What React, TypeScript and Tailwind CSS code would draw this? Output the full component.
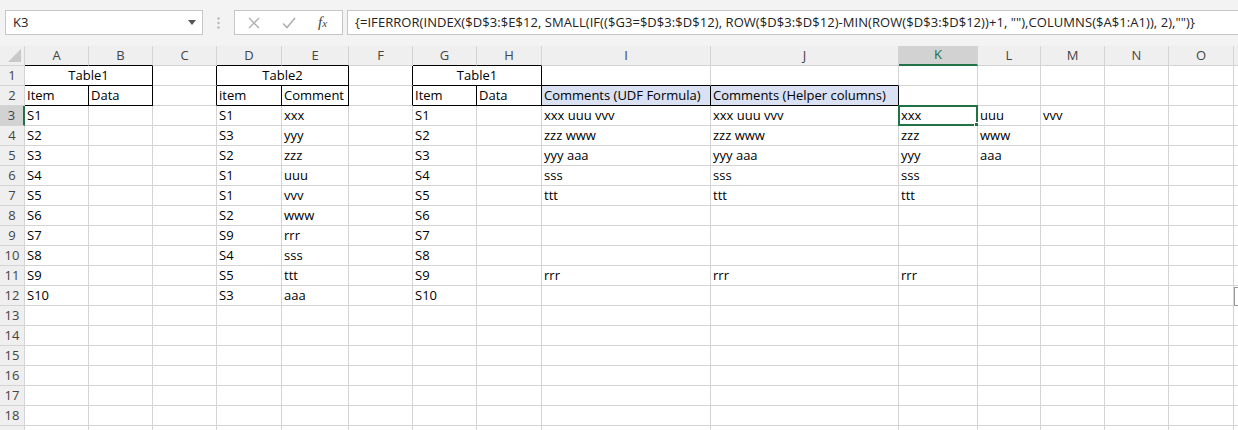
import React from 'react'

const cols = ['A', 'B', 'C', 'D', 'E', 'F', 'G', 'H', 'I', 'J', 'K', 'L', 'M', 'N', 'O', 'P']

const data: Record<string, string> = {
  A2: 'Item', B2: 'Data', D2: 'item', E2: 'Comment', G2: 'Item', H2: 'Data',
  I2: 'Comments (UDF Formula)', J2: 'Comments (Helper columns)',
  I3: 'xxx uuu vvv', J3: 'xxx uuu vvv', K3: 'xxx', L3: 'uuu', M3: 'vvv',
  I4: 'zzz www', J4: 'zzz www', K4: 'zzz', L4: 'www',
  I5: 'yyy aaa', J5: 'yyy aaa', K5: 'yyy', L5: 'aaa',
  I6: 'sss', J6: 'sss', K6: 'sss',
  I7: 'ttt', J7: 'ttt', K7: 'ttt',
  I11: 'rrr', J11: 'rrr', K11: 'rrr',
}
const dCol = ['S1', 'S3', 'S2', 'S1', 'S1', 'S2', 'S9', 'S4', 'S5', 'S3']
const eCol = ['xxx', 'yyy', 'zzz', 'uuu', 'vvv', 'www', 'rrr', 'sss', 'ttt', 'aaa']
for (let i = 0; i < 10; i++) {
  data['A' + (i + 3)] = 'S' + (i + 1)
  data['G' + (i + 3)] = 'S' + (i + 1)
  data['D' + (i + 3)] = dCol[i]
  data['E' + (i + 3)] = eCol[i]
}

// black table edges
const blackRight: Record<number, string[]> = {
  1: ['B', 'C', 'E', 'F', 'H'],
  2: ['A', 'B', 'C', 'D', 'E', 'F', 'G', 'H', 'I', 'J'],
}
const blackBottom: Record<number, string[]> = {
  0: ['A', 'B', 'D', 'E', 'G', 'H'],
  1: ['A', 'B', 'D', 'E', 'G', 'H', 'I', 'J'],
  2: ['A', 'B', 'D', 'E', 'G', 'H', 'I', 'J'],
}
const merged: Record<string, string> = { A1: 'Table1', D1: 'Table2', G1: 'Table1' }

const cellFont = { fontFamily: '"Open Sans", sans-serif' }

function Cell({ row, col }: { row: number; col: string }) {
  const key = col + row
  const br = blackRight[row]?.includes(col) ? 'border-r-black' : 'border-r-[#d4d4d4]'
  const bb = blackBottom[row]?.includes(col) ? 'border-b-black' : 'border-b-[#d4d4d4]'
  const fill = row === 2 && (col === 'I' || col === 'J') ? 'bg-[#d9e1f2]' : 'bg-white'
  const selected = key === 'K3'
  return (
    <div className={`relative h-5 border-r border-b ${br} ${bb} ${fill} flex items-end pl-[2px] pb-[1px] overflow-visible whitespace-nowrap text-[13px] leading-[18px] text-black`}>
      {data[key]}
      {selected && (
        <div className="absolute -left-[1px] -top-[1px] -right-[1px] -bottom-[1px] border-2 border-[#217346]">
          <div className="absolute -right-[4px] -bottom-[4px] w-[6px] h-[6px] bg-[#217346] border border-white" />
        </div>
      )}
    </div>
  )
}

function MergedCell({ row, col }: { row: number; col: string }) {
  return (
    <div className="col-span-2 h-5 border-r border-b border-r-black border-b-black bg-white flex items-end justify-center pb-[1px] text-[13px] leading-[18px] text-black">
      {merged[col + row]}
    </div>
  )
}

export default function App() {
  const rows = Array.from({ length: 19 }, (_, i) => i + 1)
  return (
    <div className="w-[1238px] h-[430px] overflow-hidden bg-white relative" style={cellFont}>
      {/* formula bar */}
      <div className="h-[46px] bg-[#f3f3f3] flex items-start pt-[10px] pl-[5px]">
        <div className="w-[198px] h-[25px] bg-white border border-[#c6c6c6] flex items-center justify-between pl-[7px] pr-[6px] text-[13px] text-[#222]">
          <span>K3</span>
          <svg width="8" height="5" viewBox="0 0 8 5"><path d="M0 0h8L4 5z" fill="#555" /></svg>
        </div>
        <div className="w-[31px] h-[25px] flex items-center justify-center">
          <svg width="3" height="12" viewBox="0 0 3 12"><circle cx="1.5" cy="1.5" r="1.2" fill="#b8b8b8" /><circle cx="1.5" cy="6" r="1.2" fill="#b8b8b8" /><circle cx="1.5" cy="10.5" r="1.2" fill="#b8b8b8" /></svg>
        </div>
        <div className="w-[109px] h-[25px] bg-white border border-[#c6c6c6] flex items-center pl-[13px] gap-[22px]">
          <svg width="12" height="12" viewBox="0 0 12 12"><path d="M1 1l10 10M11 1L1 11" stroke="#b0b0b0" strokeWidth="1.4" /></svg>
          <svg width="14" height="12" viewBox="0 0 14 12"><path d="M1 6.5l4 4L13 1" stroke="#b0b0b0" strokeWidth="1.6" fill="none" /></svg>
          <span className="text-[15px] italic text-[#444] leading-none" style={{ fontFamily: '"Liberation Serif", serif' }}>f<span className="text-[11px]">x</span></span>
        </div>
        <div className="ml-[4px] flex-1 h-[25px] bg-white border border-[#c6c6c6] border-r-0 flex items-center pl-[7px] text-[13px] tracking-[0.06px] text-[#222] whitespace-nowrap">
          {'{=IFERROR(INDEX($D$3:$E$12, SMALL(IF(($G3=$D$3:$D$12), ROW($D$3:$D$12)-MIN(ROW($D$3:$D$12))+1, ""),COLUMNS($A$1:A1)), 2),"")}'}
        </div>
      </div>

      {/* grid */}
      <div className="grid grid-cols-[25px_64px_64px_64px_65px_67px_64px_64px_65px_169px_188px_79px_63px_64px_64px_65px_20px]">
        {/* header row */}
        <div className="h-5 bg-[#efefef] border-r border-b border-[#d4d4d4] flex items-end justify-end pr-[3px] pb-[3px]">
          <svg width="13" height="13" viewBox="0 0 13 13"><path d="M13 0V13H0z" fill="#c8c8c8" /></svg>
        </div>
        {cols.map(c => {
          const active = c === 'K'
          const bb = active ? 'border-b-2 border-b-[#217346]' : blackBottom[0].includes(c) ? 'border-b border-b-black' : 'border-b border-b-[#d4d4d4]'
          return (
            <div key={c} className={`h-5 ${active ? 'bg-[#d2d2d2] text-[#1e6b3f]' : 'bg-[#efefef] text-[#444]'} border-r border-r-[#d4d4d4] ${bb} flex items-center justify-center text-[13px]`}>
              {c === 'P' ? '' : c}
            </div>
          )
        })}
        {rows.map(r => (
          <React.Fragment key={r}>
            <div className={`h-5 ${r === 3 ? 'bg-[#d2d2d2] border-r-2 border-r-[#217346]' : 'bg-[#efefef] border-r border-r-[#d4d4d4]'} border-b border-b-[#d4d4d4] flex items-center justify-center text-[13px] text-[#444]`}>
              {r < 19 ? r : ''}
            </div>
            {cols.map(c => {
              if (merged[c + r]) return <MergedCell key={c} row={r} col={c} />
              if (r === 1 && (c === 'B' || c === 'E' || c === 'H')) return null
              return <Cell key={c} row={r} col={c} />
            })}
          </React.Fragment>
        ))}
      </div>

      {/* partial quick analysis icon at the right edge */}
      <div className="absolute left-[1234px] top-[287px] w-[10px] h-[19px] border border-[#9a9a9a] bg-white" />
    </div>
  )
}
